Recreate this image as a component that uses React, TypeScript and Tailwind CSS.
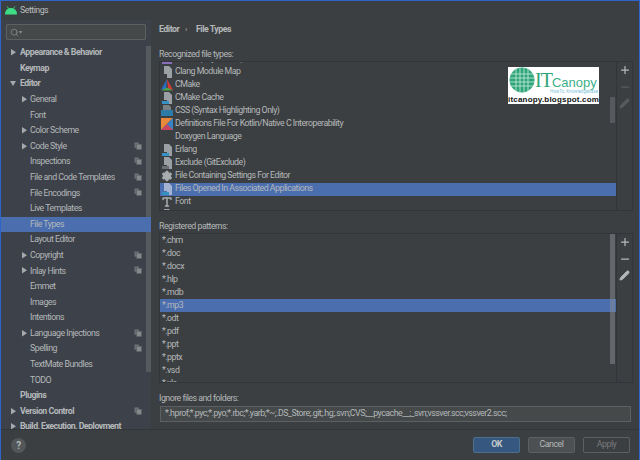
import React from "react";
import { Plus, Minus, Pencil, Search, Settings, Type } from "lucide-react";

function Tri({ down }: { down?: boolean }) {
  return (
    <svg width="7" height="7" viewBox="0 0 7 7" className="shrink-0">
      {down ? <path d="M0 1h6L3 6z" fill="#a6a9ab" /> : <path d="M1 0l5 3.2L1 6.5z" fill="#a6a9ab" />}
    </svg>
  );
}

function Copy() {
  return (
    <svg width="8" height="8" viewBox="0 0 9 9" className="shrink-0">
      <rect x="0.5" y="0.5" width="5" height="6" fill="#6b7076" />
      <rect x="3" y="2.5" width="5.5" height="6" fill="#85898c" stroke="#5a5e63" strokeWidth="0.6" />
    </svg>
  );
}

type Row = { t: string; lvl: 0 | 1; arrow?: "r" | "d"; copy?: boolean; sel?: boolean };
const side: Row[] = [
  { t: "Appearance & Behavior", lvl: 0, arrow: "r" },
  { t: "Keymap", lvl: 0 },
  { t: "Editor", lvl: 0, arrow: "d" },
  { t: "General", lvl: 1, arrow: "r" },
  { t: "Font", lvl: 1 },
  { t: "Color Scheme", lvl: 1, arrow: "r" },
  { t: "Code Style", lvl: 1, arrow: "r", copy: true },
  { t: "Inspections", lvl: 1, copy: true },
  { t: "File and Code Templates", lvl: 1, copy: true },
  { t: "File Encodings", lvl: 1, copy: true },
  { t: "Live Templates", lvl: 1 },
  { t: "File Types", lvl: 1, sel: true },
  { t: "Layout Editor", lvl: 1 },
  { t: "Copyright", lvl: 1, arrow: "r", copy: true },
  { t: "Inlay Hints", lvl: 1, arrow: "r", copy: true },
  { t: "Emmet", lvl: 1 },
  { t: "Images", lvl: 1 },
  { t: "Intentions", lvl: 1 },
  { t: "Language Injections", lvl: 1, arrow: "r", copy: true },
  { t: "Spelling", lvl: 1, copy: true },
  { t: "TextMate Bundles", lvl: 1 },
  { t: "TODO", lvl: 1 },
  { t: "Plugins", lvl: 0 },
  { t: "Version Control", lvl: 0, arrow: "r", copy: true },
  { t: "Build, Execution, Deployment", lvl: 0, arrow: "r" },
];

function FileGlyph({ c = "#9aa0a4", badge }: { c?: string; badge?: string }) {
  return (
    <svg width="11" height="12" viewBox="0 0 11 12">
      <path d="M2 0h5l3 3v9H5V8H2z" fill={c} />
      {badge && <rect x="0" y="9" width="7" height="3" fill={badge} />}
    </svg>
  );
}

const types: { t: string; icon: React.ReactNode; sel?: boolean }[] = [
  {
    t: "C/C++ (Objective-C)",
    icon: (
      <svg width="12" height="12" viewBox="0 0 12 12">
        <rect x="1" y="1" width="10" height="10" fill="#8a6fb8" />
      </svg>
    ),
  },
  { t: "Clang Module Map", icon: <FileGlyph /> },
  {
    t: "CMake",
    icon: (
      <svg width="12" height="12" viewBox="0 0 12 12">
        <path d="M6 0L0 11l5-1.5z" fill="#2a6fc4" />
        <path d="M6 0l6 11-5-1.500z" fill="#d43a35" />
        <path d="M0 11.5h12L6 8.500z" fill="#4aa84a" />
      </svg>
    ),
  },
  { t: "CMake Cache", icon: <FileGlyph badge="#3592c4" /> },
  {
    t: "CSS (Syntax Highlighting Only)",
    icon: (
      <svg width="12" height="12" viewBox="0 0 12 12">
        <path d="M2 0h6l2 2v4H2z" fill="#7b8085" />
        <rect x="0" y="5" width="12" height="6" fill="#2f7ba8" />
      </svg>
    ),
  },
  {
    t: "Definitions File For Kotlin/Native C Interoperability",
    icon: (
      <svg width="12" height="12" viewBox="0 0 12 12">
        <path d="M0 0h12L0 12z" fill="#e8883a" />
        <path d="M6 6l6-6v12H0z" fill="#3b82c4" />
        <path d="M0 12l6-6 6 6z" fill="#c7455f" />
      </svg>
    ),
  },
  { t: "Doxygen Language", icon: null },
  { t: "Erlang", icon: <FileGlyph badge="#3592c4" /> },
  { t: "Exclude (GitExclude)", icon: <FileGlyph badge="#6b7076" /> },
  { t: "File Containing Settings For Editor", icon: <Settings size={12} color="#a8adb0" fill="#a8adb0" /> },
  { t: "Files Opened In Associated Applications", icon: <FileGlyph c="#a4b3cf" badge="#3592c4" />, sel: true },
  { t: "Font", icon: <Type size={12} color="#a8adb0" strokeWidth={3} /> },
  { t: "GitIgnore", icon: <FileGlyph /> },
];

const patterns = ["*.chm", "*.doc", "*.docx", "*.hlp", "*.mdb", "*.mp3", "*.odt", "*.pdf", "*.ppt", "*.pptx", "*.vsd", "*.xls"];

function Tools({ dim }: { dim?: boolean }) {
  const low = dim ? "#585c5f" : "#b4b8ba";
  return (
    <div className="w-4 shrink-0 border-l border-[#32353a] flex flex-col items-center pt-[2px] gap-[5px]">
      <Plus size={12} color="#b4b8ba" strokeWidth={2.5} />
      <Minus size={12} color={low} strokeWidth={2.5} />
      <Pencil size={11} color={low} fill={low} />
    </div>
  );
}

export default function App() {
  return (
    <div
      className="w-[640px] h-[460px] overflow-hidden bg-[#3c3f41] text-[#b4b8ba] text-[8.8px] tracking-[-0.5px] flex flex-col border-t border-l border-r border-[#2f65ca] relative"
      style={{ fontFamily: 'Roboto, "Noto Sans", sans-serif' }}
    >
      <div className="h-[19px] shrink-0 flex items-center pl-[4px] gap-[3px] bg-[#3c3f41]">
        <svg width="12" height="9" viewBox="0 0 12 9">
          <path d="M0 8.5C0 4 3 2 6 2s6 2 6 6.500z" fill="#3ddc84" />
          <path d="M2 .3l1.800 2.500M10 .3L8.200 2.800" stroke="#3ddc84" strokeWidth="0.8" />
        </svg>
        <span className="text-[#babdbf]">Settings</span>
      </div>

      <div className="flex-1 flex min-h-0">
        <aside className="w-[150px] shrink-0 bg-[#3d4149] flex flex-col relative overflow-hidden">
          <div className="mx-[5px] mt-[4px] h-[16px] mb-[5px] shrink-0 bg-[#45494a] border border-[#5c6062] flex items-center pl-[3px] rounded-[1px]">
            <Search size={9} color="#8a8e90" />
            <span className="text-[6px] text-[#8a8e90] leading-none">▾</span>
          </div>
          <div className="absolute right-[0px] top-[26px] w-[5px] h-[326px] bg-[#565a5f]" />
          <div className="flex flex-col relative">
            {side.map((r) => (
              <div
                key={r.t}
                className={`h-[15.6px] shrink-0 flex items-center relative ${r.sel ? "bg-[#4b6eaf]" : ""} ${r.lvl === 0 ? "pl-[19px] font-bold" : "pl-[29px]"}`}
              >
                {r.arrow && (
                  <span className={`absolute top-[4px] ${r.lvl === 0 ? "left-[9px]" : "left-[20px]"}`}>
                    <Tri down={r.arrow === "d"} />
                  </span>
                )}
                <span className="whitespace-nowrap">{r.t}</span>
                {r.copy && (
                  <span className="absolute left-[133px] top-[3px]">
                    <Copy />
                  </span>
                )}
              </div>
            ))}
          </div>
        </aside>

        <main className="flex-1 min-w-0 pl-[8px] pr-[6px] flex flex-col">
          <div className="h-[20px] flex items-center font-bold shrink-0">
            <span className="w-[26px]">Editor</span>
            <span className="w-[11px] text-[8px] font-normal">›</span>
            <span>File Types</span>
          </div>
          <div className="mt-[8px] h-[13px] flex items-center shrink-0">Recognized file types:</div>
          <div className="h-[150px] shrink-0 border border-[#32353a] flex relative">
            <div className="flex-1 min-w-0 overflow-hidden relative">
              <div className="-mt-[9.5px]">
                {types.map((r) => (
                  <div key={r.t} className={`h-[13px] flex items-center gap-[2px] pl-[1px] whitespace-nowrap ${r.sel ? "bg-[#4b6eaf]" : ""}`}>
                    <span className="w-[12px] h-[12px] flex items-center justify-center shrink-0">{r.icon}</span>
                    <span>{r.t}</span>
                  </div>
                ))}
              </div>
              <div className="absolute right-[1px] top-[35px] w-[5px] h-[26px] bg-[#565a5f]" />
            </div>
            <Tools dim />
          </div>
          <div className="mt-[9px] h-[13px] flex items-center shrink-0">Registered patterns:</div>
          <div className="h-[150px] shrink-0 border border-[#32353a] flex relative">
            <div className="flex-1 min-w-0 overflow-hidden relative">
              {patterns.map((p) => (
                <div key={p} className={`h-[13px] flex items-center pl-[2px] ${p === "*.mp3" ? "bg-[#4b6eaf]" : ""}`}>
                  {p}
                </div>
              ))}
              <div className="absolute right-[1px] top-0 w-[5px] h-[130px] bg-[#8a8e9480]" />
            </div>
            <Tools />
          </div>
          <div className="mt-[9px] h-[13px] flex items-center shrink-0">Ignore files and folders:</div>
          <div className="mt-[1px] h-[16px] mr-[2px] ml-[1px] shrink-0 bg-[#45494a] border border-[#5c6062] flex items-center pl-[4px] whitespace-nowrap overflow-hidden">
            *.hprof;*.pyc;*.pyo;*.rbc;*.yarb;*~;.DS_Store;.git;.hg;.svn;CVS;__pycache__;_svn;vssver.scc;vssver2.scc;
          </div>
        </main>
      </div>

      <div className="h-[31px] shrink-0 border-t border-[#32353a] flex items-center justify-between pl-[10px] pr-[9px]">
        <div className="w-[15px] h-[15px] rounded-full bg-[#53575a] flex items-center justify-center font-bold text-[10px]">?</div>
        <div className="flex gap-[8px]">
          <div className="w-[47px] h-[16px] rounded-[2px] bg-[#365880] border border-[#4c708c] flex items-center justify-center font-bold text-[#c5c9cc]">OK</div>
          <div className="w-[47px] h-[16px] rounded-[2px] bg-[#4c5052] border border-[#5e6060] flex items-center justify-center">Cancel</div>
          <div className="w-[47px] h-[16px] rounded-[2px] border border-[#5e6060] flex items-center justify-center text-[#777a7c]">Apply</div>
        </div>
      </div>

      <div className="absolute left-[507px] top-[66px] w-[91px] h-[37px] bg-white flex flex-col overflow-hidden">
        <div className="flex h-[25px] items-center">
          <svg width="26" height="26" viewBox="0 0 26 26" className="shrink-0 ml-[1px]">
            <circle cx="13" cy="13" r="12.500" fill="#2fa67a" />
            <path d="M1 7h24M0 11h26M0 15h26M1 19h24M7 1v24M11 0v26M15 0v26M19 1v24" stroke="#c9ecdf" strokeWidth="0.8" />
          </svg>
          <div className="flex-1 leading-none whitespace-nowrap tracking-normal">
            <span className="text-[20px] text-[#2fa67a] tracking-[-1px]" style={{ fontFamily: '"Liberation Serif", serif' }}>IT</span>
            <span className="text-[13px] text-[#3bb08a]" style={{ fontFamily: '"Liberation Sans", sans-serif' }}>Canopy</span>
          </div>
        </div>
        <div className="text-[4.500px] leading-none text-[#7fc4dc] text-right pr-[1px] -mt-[2px] whitespace-nowrap tracking-normal">HowTo, Knowledgebase</div>
        <div className="text-[8px] font-bold leading-[9px] text-[#111] text-center tracking-[0.2px] whitespace-nowrap" style={{ fontFamily: '"Liberation Sans", sans-serif' }}>
          itcanopy.blogspot.com
        </div>
      </div>
    </div>
  );
}
